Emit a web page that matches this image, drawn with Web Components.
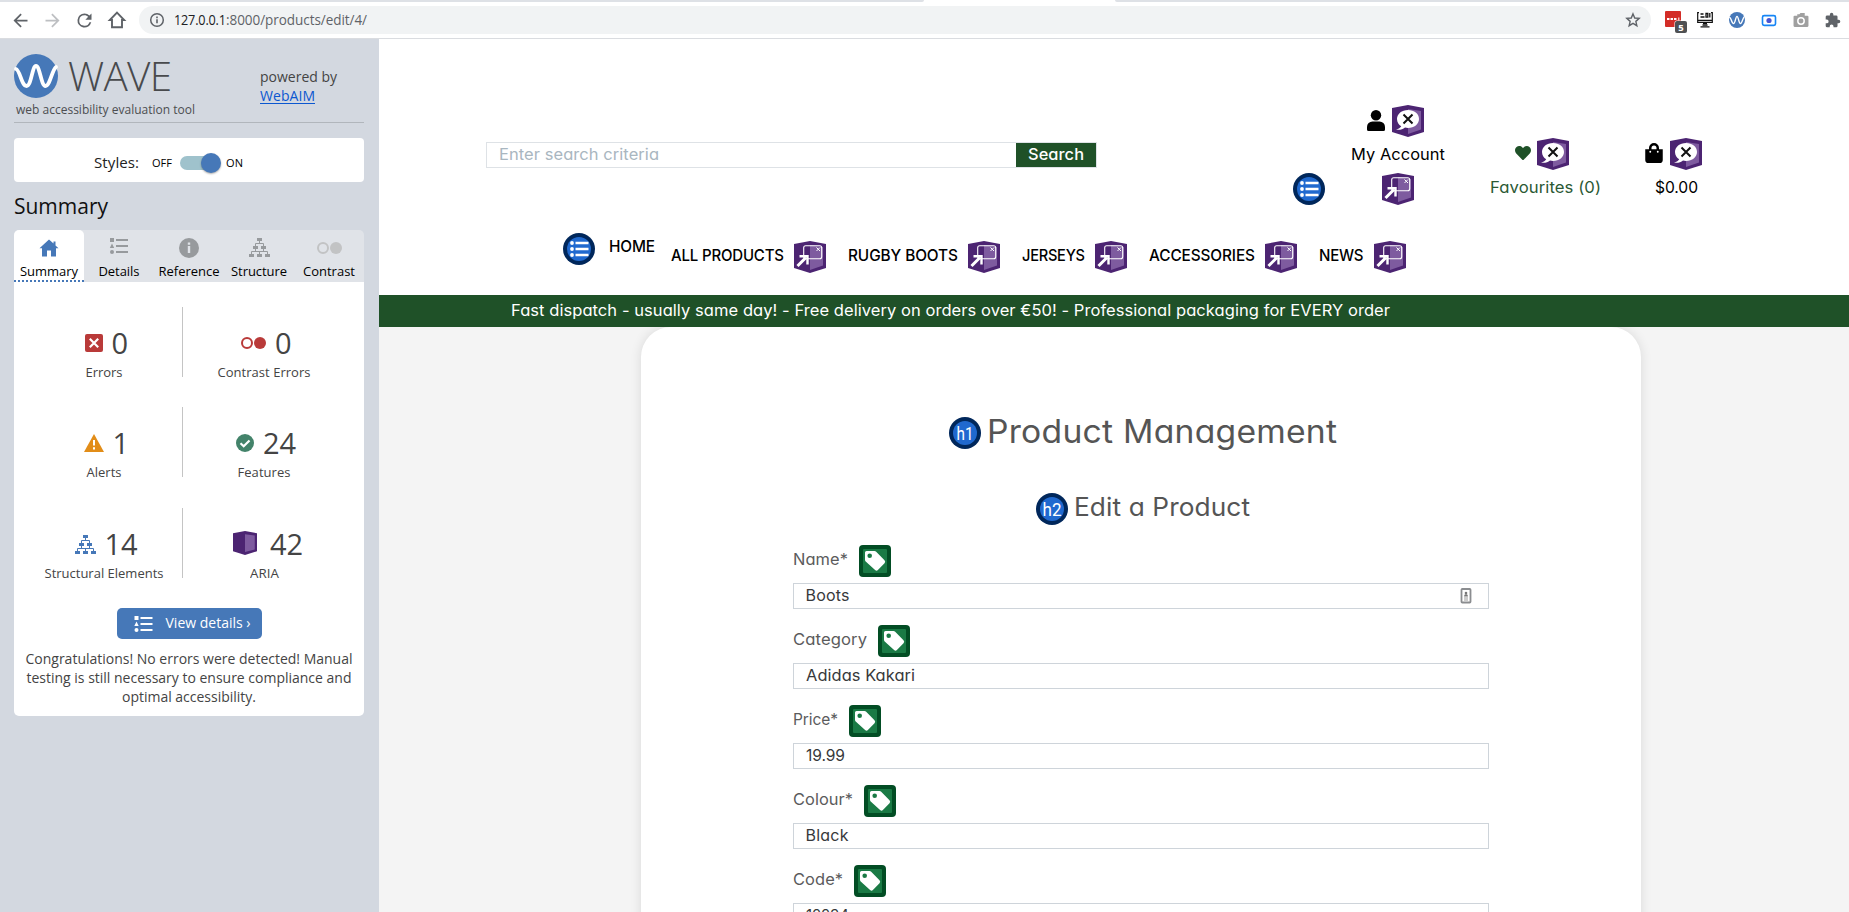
<!DOCTYPE html>
<html lang="en">
<head>
<meta charset="utf-8">
<title>Product Management</title>
<style>
html,body{margin:0;height:100%;overflow:hidden;background:#fff}
body{font-family:Inter,"Open Sans",sans-serif;font-size:16px;color:#000}
</style>
</head>
<body>
<app-window></app-window>
<script>
const ICONS = {
  back:['0 0 24 24','<path d="M20 11H7.8l5.6-5.6L12 4l-8 8 8 8 1.4-1.4L7.8 13H20z" fill="#5f6368"/>'],
  forward:['0 0 24 24','<path d="M4 11h12.2l-5.6-5.6L12 4l8 8-8 8-1.4-1.4 5.6-5.6H4z" fill="#bdbfc2"/>'],
  reload:['0 0 24 24','<path d="M17.65 6.35A7.96 7.96 0 0 0 12 4a8 8 0 1 0 7.73 10h-2.08A6 6 0 1 1 12 6c1.66 0 3.14.69 4.22 1.78L13 11h7V4z" fill="#5f6368"/>'],
  homeline:['0 0 20 20','<path d="M10 2.7 17.2 10H15v7.200H5V10H2.800z" fill="none" stroke="#5f6368" stroke-width="1.900"/>'],
  info:['0 0 16 16','<circle cx="8" cy="8" r="6.300" fill="none" stroke="#5f6368" stroke-width="1.500"/><path d="M7.200 7.200h1.600v4H7.200zM7.200 4.600h1.600v1.600H7.200z" fill="#5f6368"/>'],
  star:['0 0 16 16','<path d="m8 1.900 1.750 4.100 4.450.4-3.350 2.950 1 4.350L8 11.400l-3.850 2.300 1-4.350L1.800 6.400l4.450-.4z" fill="none" stroke="#5f6368" stroke-width="1.400"/>'],
  dots:['0 0 24 24','<rect x="0" y="1" width="16" height="16" rx="1" fill="#d32d27"/><path d="M2 9h2.500M5.500 9H8M9 9h2.500" stroke="#fff" stroke-width="2.200"/><path d="M13.800 7.500v3" stroke="#fff" stroke-width="1"/><rect x="9.500" y="10.500" width="13" height="13" rx="2.500" fill="#fff"/><rect x="10" y="11" width="12" height="12" rx="2" fill="#4f5153"/><text x="16" y="20.500" font-family="Open Sans" font-size="9.500" font-weight="700" fill="#fff" text-anchor="middle">5</text>'],
  monitor:['0 0 16 16','<path d="M2 .7H.7v9.600h14.600V.7H14M.7 8.300h14.600" fill="none" stroke="#111" stroke-width="1.200"/><path d="M3.500 2h3M3.500 5h4M9 1.500h1.800v3.700H9zM12.800 1v4.500M6 11.300h4M5.500 13h5M3.500 14.800h9" fill="none" stroke="#111" stroke-width="1.300"/>'],
  wave:['0 0 44 44','<circle cx="22" cy="22" r="22" fill="#4678b8"/><path d="M2 15C6 16 7.500 32 12.500 32S18 12 22 12s5 20 9.500 20S38 16 42 13" fill="none" stroke="#fff" stroke-width="3.800" stroke-linecap="round"/>'],
  camblue:['0 0 14 12','<rect x="1" y="1.500" width="12" height="9" rx="1.500" fill="#fff" stroke="#1685f5" stroke-width="1.500"/><circle cx="7" cy="6" r="2.400" fill="#4a55d0"/>'],
  camera:['0 0 15 13','<path d="M1.500 2.500H4V1h2l1-1h4v2.500h2.500q1 0 1 1V12q0 1-1 1h-12q-1 0-1-1V3.500q0-1 1-1z" fill="#a0a0a0"/><circle cx="7.500" cy="7.500" r="3" fill="none" stroke="#fff" stroke-width="1.400"/>'],
  puzzle:['1 0 23 23','<path d="M20.500 11H19V7a2 2 0 0 0-2-2h-4V3.500a2.500 2.500 0 0 0-5 0V5H4a2 2 0 0 0-2 2v3.800h1.500a2.700 2.700 0 0 1 0 5.400H2V20a2 2 0 0 0 2 2h3.800v-1.500a2.700 2.700 0 0 1 5.400 0V22H17a2 2 0 0 0 2-2v-4h1.500a2.500 2.500 0 0 0 0-5z" fill="#5f6368"/>'],
  house:['0 0 20 18','<path d="M10 .5.5 9.200H3V17.500h5v-6h4v6h5V9.200h2.500L16.500 6.500V2.500h-2v2z" fill="currentColor"/>'],
  list:['0 0 18 16','<path d="M0 0h4v4H0zM2 5.500 4.200 10H-.2zM6 1h12v2H6zM6 7h12v2H6zM6 13h12v2H6z" fill="currentColor"/><circle cx="2" cy="14" r="2" fill="currentColor"/>'],
  ref:['0 0 20 20','<circle cx="10" cy="10" r="10" fill="currentColor"/><path d="M8.800 4.500h2.400v2.200H8.800zM8.800 8h2.400v7H8.800z" fill="#e0e3e8"/>'],
  tree:['0 0 21 19','<path d="M8 0h5v3H8zM4 8h5v3H4zM12 8h5v3h-5zM0 16h5v3H0zM8 16h5v3H8zM16 16h5v3h-5z" fill="currentColor"/><path d="M10.500 3v2.500M6.500 8V5.500h8V8M6.500 11v2.500M14.500 11v2.500M2.500 16v-2.500h16V16M10.500 13.500V16" fill="none" stroke="currentColor" stroke-width="1"/>'],
  contrast:['0 0 25 12','<circle cx="6" cy="6" r="5" fill="none" stroke="currentColor" stroke-width="2"/><circle cx="19" cy="6" r="6" fill="currentColor"/>'],
  error:['0 0 18 18','<rect width="18" height="18" rx="2" fill="#b93a39"/><path d="m4.800 4.800 8.400 8.400m0-8.400-8.400 8.400" stroke="#fff" stroke-width="2.200"/>'],
  alert:['0 0 20 18','<path d="M10 0 20 18H0z" fill="#e28d18"/><path d="M9 6h2v5.500H9zM9 13.300h2v2.200H9z" fill="#fff"/>'],
  check:['0 0 18 18','<circle cx="9" cy="9" r="9" fill="#43836a"/><path d="m4.500 9.200 3.200 3 5.800-5.700" fill="none" stroke="#fff" stroke-width="2.200"/>'],
  cube:['0 0 32 32','<path d="M0 3 16 0l16 3v24L16 32 0 27z" fill="#4c2472"/><path d="M16 4.300 29 6v18.500L16 28z" fill="#7e5b9f"/>'],
  aria:['0 0 32 32','<path d="M0 3 16 0l16 3v24L16 32 0 27z" fill="#4c2472"/><path d="M16 4 29 6v18.500L16 29z" fill="#7e5b9f"/><path d="M16 5C9.800 5 5 8.900 5 14c0 3.100 1.700 5.700 4.200 7.300-.8 1.500-2.500 2.600-5.200 3.400 4 .5 7-.5 9-2.200 1 .3 2 .4 3 .4 6.200 0 11-3.900 11-9S22.200 5 16 5z" fill="#fff"/><path d="m11.500 9.500 9 9m0-9-9 9" stroke="#111" stroke-width="2"/>'],
  link:['0 0 32 32','<path d="M0 3 16 0l16 3v24L16 32 0 27z" fill="#4c2472"/><path d="M16 4 29 6v18.500L16 29z" fill="#7e5b9f"/><rect x="9.700" y="4.700" width="18" height="13" rx="2" fill="none" stroke="#fff" stroke-width="1.100"/><path d="m22.500 6.500 3.500 3.500m0-3.500-3.500 3.500" stroke="#fff" stroke-width="1"/><path d="M3.500 25 12 16.500" stroke="#fff" stroke-width="3"/><path d="M5.500 15.300h8v8.200" fill="none" stroke="#fff" stroke-width="2.400"/>'],
  ulist:['0 0 32 32','<circle cx="16" cy="16" r="16" fill="#00275b"/><circle cx="16" cy="16" r="12" fill="#2069cf"/><path d="M12.500 10h13M12.500 16h13M12.500 22h13" stroke="#fff" stroke-width="2.400"/><circle cx="9" cy="10" r="1.900" fill="#fff"/><circle cx="9" cy="16" r="1.900" fill="#fff"/><circle cx="9" cy="22" r="1.900" fill="#fff"/>'],
  h1:['0 0 32 32','<circle cx="16" cy="16" r="16" fill="#00275b"/><circle cx="16" cy="16" r="12" fill="#2069cf"/><text x="16" y="23" font-family="Roboto" font-size="18" font-weight="400" fill="#fff" text-anchor="middle" textLength="17" lengthAdjust="spacingAndGlyphs">h1</text>'],
  h2:['0 0 32 32','<circle cx="16" cy="16" r="16" fill="#00275b"/><circle cx="16" cy="16" r="12" fill="#2069cf"/><text x="16" y="23" font-family="Roboto" font-size="18" font-weight="400" fill="#fff" text-anchor="middle" textLength="19" lengthAdjust="spacingAndGlyphs">h2</text>'],
  tag:['0 0 32 32','<rect width="32" height="32" rx="4" fill="#024d24"/><rect x="4" y="4" width="24" height="24" rx="1" fill="#1a7a45"/><path fill-rule="evenodd" d="M7.500 6h8q1 0 1.700.7l8.300 8.500q1.400 1.600 0 3l-6.600 6.900q-1.400 1.300-2.800 0L6.700 16.500Q6 15.800 6 14.800V7.500Q6 6 7.500 6zM10.700 8.500a2.300 2.300 0 1 0 0 4.600 2.300 2.300 0 0 0 0-4.600z" fill="#fff"/>'],
  user:['0 0 18 21','<circle cx="9" cy="5.200" r="5.200" fill="#000"/><path d="M5.500 11.500h7A5.500 5.500 0 0 1 18 17v2.500q0 1.500-1.500 1.500h-15Q0 21 0 19.500V17a5.500 5.500 0 0 1 5.500-5.500z"/>'],
  heart:['0 0 512 448','<path d="M462 30c-55-47-136-38-187 14l-19 20-20-20C186-8 105-17 50 30c-63 54-66 150-10 208l193 200c13 13 33 13 46 0l193-200c56-58 53-154-10-208z" fill="#1f5128"/>'],
  bag:['0 0 448 512','<path d="M352 160v-32a128 128 0 0 0-256 0v32H0v272a80 80 0 0 0 80 80h288a80 80 0 0 0 80-80V160zm-192-32a64 64 0 0 1 128 0v32H160zm160 120a24 24 0 1 1 0-48 24 24 0 0 1 0 48zm-192 0a24 24 0 1 1 0-48 24 24 0 0 1 0 48z"/>'],
  card:['0 0 12 16','<rect x="1.500" y="1" width="9" height="13.500" rx=".8" fill="#fff" stroke="#8b8d90" stroke-width="1.800"/><circle cx="6" cy="5" r="1.300" fill="#777"/><path d="M4 8.500Q4 6 6 6t2 2.500z" fill="#777"/><path d="M4 10h4M4 12h4" stroke="#999" stroke-width="1.100"/>']
};

/* <ui-icon name w h> draws one glyph of the set */
customElements.define('ui-icon', class extends HTMLElement {
  connectedCallback(){
    const [box, body] = ICONS[this.getAttribute('name')];
    const w = this.getAttribute('w') || 32, h = this.getAttribute('h') || w;
    const root = this.attachShadow({mode:'open'});
    root.innerHTML = `<style>:host{display:block;flex:none;width:${w}px;height:${h}px}svg{display:block;overflow:visible}</style>
      <svg width="${w}" height="${h}" viewBox="${box}" aria-hidden="true">${body}</svg>`;
  }
});

/* <fit-text w lh> one line of text, widened and tracked to a measure */
customElements.define('fit-text', class extends HTMLElement {
  connectedCallback(){
    const w = +this.getAttribute('w'), lh = this.getAttribute('lh');
    const root = this.attachShadow({mode:'open'});
    root.innerHTML = `<style>:host{display:block;flex:none;width:${w}px;line-height:${lh}px;height:${lh}px;white-space:nowrap;font-feature-settings:"cv11"}span{display:inline-block;transform-origin:0 50%}</style><span></span>`;
    const s = root.querySelector('span');
    s.textContent = this.textContent;
    const n = s.textContent.length, natural = s.getBoundingClientRect().width;
    let k = 1 + (w / natural - 1) * .8;
    if (Math.abs(k - 1) < .02 || n < 3) k = 1; else s.style.transform = `scaleX(${k.toFixed(4)})`;
    if (n > 1) s.style.letterSpacing = ((w / k - natural) / (n - 1)).toFixed(3) + 'px';
  }
});

function define(name, html, css){
  customElements.define(name, class extends HTMLElement {
    connectedCallback(){
      if (this.shadowRoot) return;
      const a = k => this.getAttribute(k) || '';
      this.attachShadow({mode:'open'}).innerHTML =
        `<style>*{box-sizing:border-box}${css}</style>` + (typeof html === 'function' ? html(a) : html);
    }
  });
}

define('nav-item', a => `<fit-text w="${a('w')}" lh="32">${a('label')}</fit-text><ui-icon name="link"></ui-icon>`,
  ':host{display:flex;font-weight:500}ui-icon{margin:2px 0 0 auto}');

define('form-field', a => `<div class="l"><fit-text w="${a('lw')}" lh="28">${a('label')}</fit-text><ui-icon name="tag"></ui-icon></div>
  <div class="i"><fit-text w="${a('vw')}" lh="23">${a('value')}</fit-text>${a('card') ? '<ui-icon name="card" w="12" h="16"></ui-icon>' : ''}</div>`,
  `:host{display:block;margin-bottom:16px}.l{display:flex;gap:11px;color:#5b5b5c;height:32px;margin-bottom:6px}
   .i{display:flex;justify-content:space-between;height:26px;border:1px solid #ced4da;padding:0 16px 0 11.500px;color:#37393b}ui-icon[name=card]{margin-top:4px}`);

define('stat-cell', a => `<div class="t"><ui-icon name="${a('icon')}" w="${a('iw')}" h="${a('ih')}" style="color:${a('tint')}"></ui-icon><fit-text w="${a('nw')}" lh="40">${a('num')}</fit-text></div><fit-text class="c" w="${a('lw')}" lh="20">${a('label')}</fit-text>`,
  `:host{display:flex;flex-direction:column;align-items:center;height:70px;padding-top:16px;color:#444;font-size:13px}
   .t{display:flex;align-items:center;gap:9px;font-size:29px;height:40px;margin:0 0 -1px 4px}
   ui-icon[name=cube]{margin:-2px 4px 0 0}:host([icon=cube]) .t{margin-left:8px}`);

define('tab-item', a => `<span class="i"><ui-icon name="${a('icon')}" w="${a('iw')}" h="${a('ih')}"></ui-icon></span><fit-text w="${a('lw')}" lh="18">${a('label')}</fit-text>`,
  `:host{display:flex;flex-direction:column;align-items:center;width:70px;height:52px;color:#979a9d;font-size:13px;border-bottom:2px solid transparent}
   .i{height:35px;display:flex;align-items:center;margin-bottom:-3px}fit-text{color:#000}
   ui-icon[name=list]{margin-top:-3px}
   :host([active]){background:#fff;border-radius:5px 5px 0 0;color:#4678b8;border-bottom:2px dotted #4678b8}:host([faint]){color:#c2c3c4}`);

define('wave-sidebar', `
 <div class="brand"><div><div class="logo"><ui-icon name="wave" w="44"></ui-icon><fit-text class="wv" w="104" lh="44">WAVE</fit-text></div>
 <fit-text class="tg" w="179" lh="18">web accessibility evaluation tool</fit-text></div>
 <div class="by"><fit-text w="77" lh="19">powered by</fit-text><a><fit-text w="55" lh="19">WebAIM</fit-text></a></div></div>
 <div class="styles"><fit-text w="45" lh="20">Styles:</fit-text><fit-text class="s" w="20" lh="20">OFF</fit-text><i><b></b></i><fit-text class="s" w="17" lh="20">ON</fit-text></div>
 <fit-text class="h" w="94" lh="30">Summary</fit-text>
 <div class="tabs"><tab-item active icon="house" iw="20" ih="18" label="Summary" lw="58"></tab-item><tab-item icon="list" iw="18" ih="16" label="Details" lw="41"></tab-item><tab-item icon="ref" iw="20" ih="20" label="Reference" lw="61"></tab-item><tab-item icon="tree" iw="21" ih="19" label="Structure" lw="56"></tab-item><tab-item faint icon="contrast" iw="25" ih="12" label="Contrast" lw="52"></tab-item></div>
 <div class="panel">
  <div class="grid">
   <stat-cell icon="error" iw="18" ih="18" num="0" nw="16" label="Errors" lw="37"></stat-cell><stat-cell tint="#b93a39" icon="contrast" iw="25" ih="12" num="0" nw="16" label="Contrast Errors" lw="93"></stat-cell>
   <stat-cell icon="alert" iw="20" ih="18" num="1" nw="16" label="Alerts" lw="35"></stat-cell><stat-cell icon="check" iw="18" ih="18" num="24" nw="33" label="Features" lw="53"></stat-cell>
   <stat-cell tint="#4678b8" icon="tree" iw="21" ih="19" num="14" nw="33" label="Structural Elements" lw="119"></stat-cell><stat-cell icon="cube" iw="24" ih="24" num="42" nw="33" label="ARIA" lw="29"></stat-cell>
  </div>
  <div class="btn"><ui-icon name="list" w="19" h="16"></ui-icon><fit-text w="85" lh="30">View details ›</fit-text></div>
  <div class="p"><fit-text w="327" lh="19">Congratulations! No errors were detected! Manual</fit-text><fit-text w="325" lh="19">testing is still necessary to ensure compliance and</fit-text><fit-text w="134" lh="19">optimal accessibility.</fit-text></div>
 </div>`,
`:host{display:block;width:379px;background:#d3d8e0;font-family:"Open Sans",sans-serif;padding:15px 15px 0 14px;color:#444}
 .brand{display:flex;justify-content:space-between;height:69px;border-bottom:1px solid #b1b6bc}
 .logo{display:flex;gap:10px;height:44px}.wv{font-size:40.5px;font-weight:300;color:#484a4d}.tg{font-size:12px;margin:3px 0 0 2px;color:#4c4e51}
 .by{font-size:14px;padding-top:13px;width:104px}.by a{color:#0b57d0;display:block;width:55px;height:18px;border-bottom:1px solid #0b57d0}
 .styles{display:flex;align-items:center;height:44px;margin-top:15px;background:#fff;border-radius:4px;padding:5px 0 0 80px;color:#222;font-size:14.5px}
 .s{font-size:11px;color:#000;margin-left:13px}.styles i{width:34px;height:14px;border-radius:7px;background:#9fc2cc;margin:0 -1px 0 8px;display:flex;justify-content:flex-end;align-items:center}
 .styles i+.s{margin-left:13px}.styles b{flex:none;width:20px;height:20px;border-radius:50%;background:#4678b8;box-shadow:0 1px 2px #0005;margin-right:-7px}
 .h{font-size:21px;color:#111;margin:9px 0}
 .tabs{display:flex;background:#e0e3e8;border-radius:5px 5px 0 0;height:52px}
 .panel{background:#fff;height:433.5px;border-radius:0 0 5px 5px;display:flex;flex-direction:column;align-items:center;padding-top:25px;width:350px}
 .grid{display:grid;grid-template-columns:169px 162px;grid-template-rows:70px 71px 70px;row-gap:30px;width:350px}
 .grid stat-cell:nth-child(odd){border-right:1px solid #c4c4c4;padding-left:12px}
 .btn{display:flex;align-items:center;gap:13px;width:145px;height:31px;padding-left:17px;border-radius:5px;background:#4678b8;color:#fff;font-size:14px;margin-top:30px}
 .btn fit-text{margin-top:-1px}
 .p{font-size:14px;display:flex;flex-direction:column;align-items:center;margin-top:10px}`);

define('browser-bar', `<div class="strip"><u></u><s></s></div><div class="bar">
 <div class="g"><ui-icon name="back" w="21"></ui-icon><ui-icon name="forward" w="21"></ui-icon><ui-icon name="reload" w="21"></ui-icon><ui-icon name="homeline" w="20"></ui-icon></div>
 <div class="url"><ui-icon name="info" w="16"></ui-icon><div class="a"><fit-text w="52" lh="20" style="color:#202124">127.0.0.1</fit-text><fit-text w="141" lh="20">:8000/products/edit/4/</fit-text></div><ui-icon name="star" w="16"></ui-icon></div>
 <div class="x"><ui-icon name="dots" w="24" style="margin:3px -8px 0 0"></ui-icon><ui-icon name="monitor" w="16"></ui-icon><ui-icon name="wave" w="16"></ui-icon><ui-icon name="camblue" w="16" h="13"></ui-icon><ui-icon name="camera" w="16" h="14"></ui-icon><ui-icon name="puzzle" w="16"></ui-icon></div></div>`,
`:host{display:block;height:39px;box-sizing:border-box;background:#fff;border-bottom:1px solid #dadce0;font-family:"Open Sans",sans-serif}
 .strip{display:flex;justify-content:space-between;height:2px}.strip u{width:924px;background:#dee1e6;border-radius:0 0 2px 0}.strip s{width:734px;background:#dee1e6;border-radius:0 0 0 2px}
 .bar{display:flex;align-items:center;height:36px;padding-left:10px}
 .g{display:flex;gap:11px;width:129px;align-items:center}.g ui-icon:last-child{margin-left:1px}.x{display:flex;gap:16px;align-items:center;margin-left:14px}
 .url{display:flex;align-items:center;width:1512px;height:28px;border-radius:14px;background:#f1f3f4;color:#5f6368;padding:0 10px;font-size:14px}
 .a{display:flex;flex:1;margin-left:8.500px}`);

define('shop-header', `
 <div class="top"><div class="search"><fit-text w="160" lh="22">Enter search criteria</fit-text><div class="go"><fit-text w="56" lh="23">Search</fit-text></div></div>
  <ui-icon name="ulist" style="margin:134px 0 0 196px"></ui-icon>
  <div class="col" style="margin:66px 0 0 27px"><div class="ic" style="margin-left:15px;gap:7px"><ui-icon name="user" w="18" h="21" style="margin-top:-1px"></ui-icon><ui-icon name="aria"></ui-icon></div><fit-text w="94" lh="34" style="margin-left:-1px">My Account</fit-text><ui-icon name="link" style="margin:2px 0 0 30px"></ui-icon></div>
  <div class="col" style="margin:99px 0 0 45px;color:#2b5934"><div class="ic" style="margin-left:25px;gap:6px"><ui-icon name="heart" w="16" h="14" style="margin-top:-2px"></ui-icon><ui-icon name="aria"></ui-icon></div><fit-text w="111" lh="34" style="margin-right:-1px">Favourites (0)</fit-text></div>
  <div class="col" style="margin:99px 0 0 45px"><div class="ic" style="gap:7px"><ui-icon name="bag" w="18" h="20" style="margin-top:-2px"></ui-icon><ui-icon name="aria"></ui-icon></div><fit-text w="43" lh="34" style="margin-left:10px">$0.00</fit-text></div>
 </div>
 <div class="nav"><ui-icon name="ulist" style="margin:13px 14px 0 184px"></ui-icon><fit-text w="46" lh="32" style="margin:10px 16px 0 0">HOME</fit-text>
  <nav-item label="ALL PRODUCTS" w="113" style="width:155px"></nav-item><nav-item label="RUGBY BOOTS" w="110" style="width:152px"></nav-item><nav-item label="JERSEYS" w="63" style="width:105px"></nav-item><nav-item label="ACCESSORIES" w="106" style="width:148px"></nav-item><nav-item label="NEWS" w="44.500" style="width:87px"></nav-item></div>
 <div class="promo"><fit-text w="879" lh="31">Fast dispatch - usually same day! - Free delivery on orders over €50! - Professional packaging for EVERY order</fit-text></div>`,
`:host{display:block;background:#fff;position:relative}.top{display:flex;align-items:flex-start;height:181px}
 .search{display:flex;justify-content:space-between;width:611px;height:26px;margin:103px 0 0 107px;border:1px solid #dee2e6;padding-left:12px;color:#a9b6c0}
 .go{background:#1f5128;color:#fff;width:80px;padding-left:12px;font-weight:500}
 .ic{display:flex;align-items:center;height:32px}
 .nav{display:flex;height:75px;font-weight:500}nav-item{margin:19px 22px 0 0}
 .promo{background:#1f5128;color:#fff;height:32px;padding-left:132px}`);

define('product-form', `<div class="h1"><ui-icon name="h1"></ui-icon><fit-text w="350" lh="29">Product Management</fit-text></div>
 <div class="h2"><ui-icon name="h2"></ui-icon><fit-text w="176" lh="28">Edit a Product</fit-text></div>
 <div class="f"><form-field label="Name*" lw="55" value="Boots" vw="44" card="1"></form-field><form-field label="Category" lw="74" value="Adidas Kakari" vw="109"></form-field><form-field label="Price*" lw="45" value="19.99" vw="39"></form-field><form-field label="Colour*" lw="60" value="Black" vw="43"></form-field><form-field label="Code*" lw="50" value="12234" vw="43"></form-field></div>`,
`:host{display:block;background:#fff;box-sizing:border-box;width:1000px;height:700px;margin-left:262px;border-radius:30px;box-shadow:0 0 12px #0000001c;padding-top:90px;color:#555}
 .h1{display:flex;gap:6px;padding-left:308px;font-size:32px;height:32px;font-weight:400}
 .h2{display:flex;gap:6px;padding-left:395px;font-size:25.500px;height:32px;margin-top:44px;font-weight:400}
 .f{margin:20px 0 0 152px;width:696px}`);

define('app-window', `<browser-bar></browser-bar><div class="b"><wave-sidebar></wave-sidebar><main><shop-header></shop-header><product-form></product-form></main></div>`,
`:host{display:block;width:1849px;height:912px;overflow:hidden}.b{display:flex;height:873px}main{width:1470px;background:#f4f4f4;overflow:hidden}wave-sidebar{flex:none;box-sizing:border-box}shop-header{z-index:1}`);
</script>
</body>
</html>
